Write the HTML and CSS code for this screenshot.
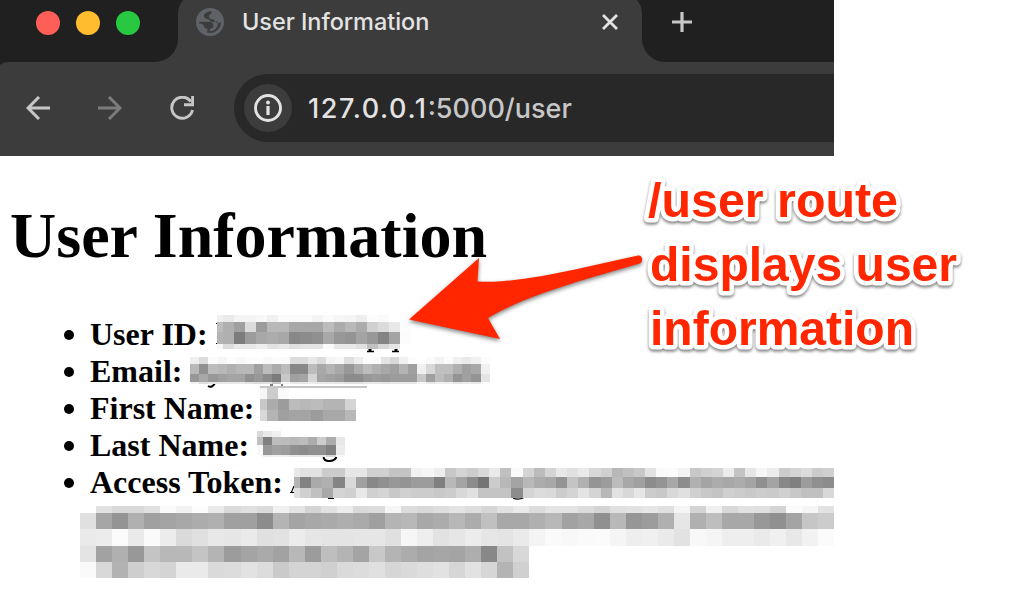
FILE: index.html
```html
<!DOCTYPE html>
<html lang="en">
<head>
<meta charset="utf-8">
<title>User Information</title>
<link rel="stylesheet" href="styles.css">
</head>
<body>
<main class="canvas">
  <div class="window">
    <header class="tab-strip">
      <div class="window-controls"><i class="dot red"></i><i class="dot yellow"></i><i class="dot green"></i></div>
      <div class="tab">
        <svg class="globe" width="28" height="28" viewBox="0 0 28 28"><circle cx="14" cy="14" r="14" fill="#5f6368"/><path d="M15.500 3.200C12 3.200 8.500 5 8 7.500c-.4 2.200 1.300 3.600 4 3.600 1.500 0 1.600 3 4.200 3 2.300 0 4.500-.3 5.300-.6 1 2.500-.3 6-2.500 8-1.500 1.400-3.500 1.800-5 1.500l-.2-2.200c2.600-.2 3.700-1.500 3.700-3.300 0-2.400-2-3.700-4.800-3.700H3.100C3 20 7.500 25 14 25c6 0 11-5 11-11-2 1.800-4.600 1.300-5.800-.4-.9-1.300-.8-2.200-2.600-2.300-2.600-.1-3.800-1.500-3.600-3.400.2-1.400 1.300-2 2.500-2.200z" fill="#3c3c3c"/><path d="M2.500 15.500C3.500 20.500 7 24 11.300 25v-4.200c-2.500 0-3.500-1.200-3.500-2.800 0-1.500-2-2.500-5.300-2.500z" fill="#5f6368"/></svg>
        <span class="tab-title">User Information</span>
        <svg class="close" width="18" height="18" viewBox="0 0 18 18"><path d="M2 2l14 14M16 2L2 16" stroke="#e3e3e3" stroke-width="2.800"/></svg>
      </div>
      <div class="strip-rest">
        <svg width="20" height="20" viewBox="0 0 20 20"><path d="M10 0v20M0 10h20" stroke="#c7c7c7" stroke-width="3.200"/></svg>
      </div>
      <svg class="tab-corner left" width="5" height="14"><path d="M0 0h5Q0 6 0 14z" fill="#202020"/></svg>
      <svg class="tab-corner right" width="5" height="14"><path d="M0 0h5v14Q5 6 0 0z" fill="#202020"/></svg>
    </header>
    <div class="toolbar">
      <svg class="toolbar-corner" width="9" height="4"><path d="M0 0h9Q3 0 0 3z" fill="#202020"/></svg>
      <svg class="nav" width="24" height="24" viewBox="0 0 24 24"><path d="M24 12H2M13 1L2 12l11 11" fill="none" stroke="#c7c7c7" stroke-width="3"/></svg>
      <svg class="nav" width="24" height="24" viewBox="0 0 24 24"><path d="M0 12h22M11 1l11 11-11 11" fill="none" stroke="#7c7c7c" stroke-width="3"/></svg>
      <svg class="nav" width="24" height="24" viewBox="0 0 24 24"><path d="M20.800 5.600A10.500 10.500 0 1 0 22.500 14" fill="none" stroke="#c7c7c7" stroke-width="2.900"/><path d="M22.600 0v8.700H14" fill="none" stroke="#c7c7c7" stroke-width="2.900"/></svg>
      <div class="address">
        <span class="site-info"><svg width="28" height="28" viewBox="0 0 28 28"><circle cx="14" cy="14" r="12.500" fill="none" stroke="#e3e3e3" stroke-width="2.900"/><circle cx="14" cy="8.500" r="1.900" fill="#e3e3e3"/><path d="M14 12v9" stroke="#e3e3e3" stroke-width="3.200"/></svg></span>
        <span class="url"><span class="host">127.0.0.1</span><span class="path">:5000/user</span></span>
      </div>
    </div>
    <section class="page">
      <h1 class="heading">User Information</h1>
      <ul class="fields">
        <li class="field"><span class="name">User ID:</span></li>
        <li class="field"><span class="name">Email:</span></li>
        <li class="field"><span class="name">First Name:</span></li>
        <li class="field"><span class="name">Last Name:</span></li>
        <li class="field"><span class="name">Access Token:</span></li>
      </ul>
    </section>
  </div>
  <svg class="redaction" id="redaction" width="834" height="610" viewBox="0 0 834 610">
    <g fill="none" stroke="#000">
      <path d="M367 351.500h7M392 351.500h7" stroke-width="1.500"/>
      <path d="M370 349v2M396 349v2" stroke-width="3"/>
      <path d="M208 386q4 2.500 7-3" stroke-width="2"/>
      <path d="M270 385h3M281 385h2" stroke-width="1.200"/>
      <path d="M216.500 323v1M216.500 343v1" stroke-width="1"/>
      <path d="M323.500 457c1 6 12 5 13-1" stroke-width="2"/>
      <path d="M513 498q5 2.500 11-.5M328 498.500h6" stroke-width="1.200"/>
      <path d="M290 492.500h4M291.500 492l2.500-6" stroke-width="1.200"/>
    </g>
    <path d="M260 387h107" stroke="#c6c6c6" stroke-width="2"/>
  </svg>
  <svg class="callout" width="600" height="220" viewBox="400 160 600 220">
    <path class="arrow" d="M409 319.500L479 258L477.500 281.500C520 284 580 268 638 255.500C643 255 643.500 262 639.500 263.500C590 278 526 295 488 318L500 339z"/>
    <g class="note">
      <text x="648" y="217" textLength="250" lengthAdjust="spacingAndGlyphs">/user route</text>
      <text x="650" y="281" textLength="307" lengthAdjust="spacingAndGlyphs">displays user</text>
      <text x="650" y="345" textLength="264" lengthAdjust="spacingAndGlyphs">information</text>
    </g>
  </svg>
</main>
<script src="mosaic.js"></script>
</body>
</html>
```
FILE: styles.css
```css
body { margin: 0; background: #fff; }
.canvas { position: relative; width: 1018px; height: 610px; overflow: hidden; background: #fff; }
.window { width: 834px; height: 610px; overflow: hidden; }
.tab-strip { position: relative; display: flex; height: 62px; background: #3c3c3c; }
.window-controls { display: flex; gap: 16px; width: 142px; height: 51px; padding: 11px 0 0 36px; background: #202020; border-bottom-right-radius: 23px; }
.dot { width: 24px; height: 24px; border-radius: 50%; }
.red { background: #ff5f57; }
.yellow { background: #febc2e; }
.green { background: #28c840; }
.tab { display: flex; align-items: center; box-sizing: border-box; width: 464px; height: 44px; padding: 0 23px 0 18px; font-family: Inter, sans-serif; color: #e3e3e3; }
.tab-title { margin: -2px 0 0 18px; font-size: 23.5px; font-weight: 500; letter-spacing: -.05px; white-space: nowrap; }
.close { margin-left: auto; }
.strip-rest { flex: 1; padding: 12px 0 0 30px; background: #202020; border-bottom-left-radius: 23px; }
.strip-rest svg { display: block; }
.tab-corner { position: absolute; top: 0; }
.tab-corner.left { left: 178px; }
.tab-corner.right { left: 637px; }
.toolbar { position: relative; display: flex; align-items: center; box-sizing: border-box; height: 94px; padding: 0 0 2px 26px; background: #3c3c3c; }
.toolbar-corner { position: absolute; left: 0; top: 0; }
.nav { flex: none; margin-right: 48px; }
.nav + .address { margin-left: -8px; }
.address { display: flex; align-items: center; flex: 1; height: 68px; box-sizing: border-box; padding-left: 10px; border-radius: 34px 0 0 34px; background: #282828; }
.site-info { display: flex; align-items: center; justify-content: center; width: 48px; height: 48px; border-radius: 50%; background: #3c3c3c; }
.url { margin-left: 16px; font: 500 27px Inter, sans-serif; white-space: nowrap; }
.host { color: #e3e3e3; letter-spacing: 1.6px; }
.path { color: #c7c7c7; }
.page { font-family: "Liberation Serif", serif; color: #000; }
.heading { margin: 43px 0 0 10px; font-size: 64px; line-height: 74px; white-space: nowrap; }
.fields { margin: 43px 0 0; padding: 0 0 0 64px; list-style: none; }
.field { display: flex; align-items: center; height: 37px; font-size: 32px; font-weight: bold; line-height: 37px; }
.field::before { content: ""; width: 10px; height: 10px; margin: 1px 16px 0 0; border-radius: 50%; background: #000; }
.redaction { position: absolute; left: 0; top: 0; }
.callout { position: absolute; left: 400px; top: 160px; }
.arrow { fill: #ff2600; filter: drop-shadow(0 2px 2px rgba(0,0,0,.5)); }
.note { font: bold 48px "Liberation Sans", sans-serif; fill: #ff2600; stroke: #fff; stroke-width: 9px; stroke-linejoin: round; paint-order: stroke; filter: drop-shadow(0 2px 1.5px rgba(0,0,0,.5)); }
.note text { paint-order: stroke; }
```
FILE: mosaic.js
```js
// Each block: left edge, width of its first cell, cell width, row edges, grey levels by row.
const blocks = [
  { x: 217, first: 5.7, size: 11.1, ys: [315, 322, 332, 344, 349], rows: [
    'f0 ea f4 f4 f8 f0 fb fa fb f4 fb f6 f4 ee fc fa ff ff',
    'bd b0 a0 dc 9c b8 b8 a8 a8 a8 bc ac b8 ac d0 dc e8 fd',
    'b4 b0 7c 9c a8 ac a8 88 8c 90 a8 98 94 a4 98 84 a4 fc',
    'f8 dc e8 e8 ee e2 e8 e0 e4 e4 fa e8 e8 e0 c0 d8 e6 ff'] },
  { x: 190.3, first: 9.07, size: 9.07, ys: [357, 364, 374, 382, 384], rows: [
    'ee dc fb f6 fc f8 fc fc f8 fc fa dc dc e8 dc f4 f8 e0 ee fc fa e4 d8 f0 fc ff fa f4 fc f0 ea f0 fc',
    'b8 90 bc b8 b0 b8 b8 a0 bc ac bc 88 88 bc a8 b4 a8 98 ac bc b0 a8 a0 b4 a0 f0 d8 c0 c0 b0 a0 a8 f0',
    '98 a8 98 a0 a4 a4 90 98 8c 7c c8 a0 a4 d4 a4 a0 9c 8c 8c 98 9c 98 9c 9c 9c c8 a0 bc b0 94 a0 94 e4',
    'f2 dc e8 e8 e8 e8 e2 dc e0 c8 f4 e8 e8 ec e8 e8 e6 e2 e2 e8 e8 e4 e8 e8 e8 f4 e8 ee ee e6 ec e8 fc'] },
  { x: 260, first: 7, size: 11.1, ys: [388, 399, 410, 421], rows: [
    'f6 cc fa ff ff ff ff ff ff',
    'c8 ac 9c bc b8 bc b4 b4 d4',
    'd8 b4 a0 a4 a4 9c a8 a8 b8'] },
  { x: 257, first: 6, size: 9.07, ys: [431, 437, 445, 455, 457], rows: [
    'd8 e8 f0 ff ff ff ff ff ff ff',
    'c0 80 bc bc b8 bc ac cc ac e8',
    'f8 98 a0 9c 90 8c 90 90 80 ec',
    'ff ec ee ee e8 e8 e8 e8 d8 fa'] },
  { x: 294, first: 6, size: 11.13, ys: [468, 477, 488, 498], rows: [
    'e8 e2 e2 cc cc e6 e6 d0 d0 c4 c4 f2 f6 ee c8 d4 cc d8 ea c0 fa d4 bc d4 e8 e0 ea d8 d0 b8 c0 c8 e2 fa fb f2 c8 d0 d4 ec c4 e6 f6 ec cc d4 dc cc d0',
    'b4 82 aa b0 84 d8 a0 88 90 98 94 9c 9c 80 b8 a4 8c 74 cc b8 a4 b8 ac a8 94 c4 b0 94 9c bc a8 a0 8c 94 a8 8c b0 a4 ac a8 ac a4 90 a4 88 80 9c 90 8c',
    'e0 d0 c0 a8 d4 d0 e8 d0 d4 c8 d0 cc cc c8 cc d8 e0 c4 c4 c4 8c d4 dc da cc d4 e4 d4 b8 e2 d8 e6 cc c8 d8 e0 d0 c8 c4 d0 cc c8 cc ca d0 c8 c0 c0 d8'] },
  { x: 80, first: 16.05, size: 16.05, ys: [506, 513, 529, 546, 562, 578], rows: [
    'ff e2 d8 d8 e0 fa f2 fc ea da e0 da f0 e4 d4 e2 ec da dc f5 dc d8 de e4 de d6 e2 ea dc e4 e4 dc d4 e0 e2 e6 e0 f5 d4 f0 d8 e2 e0 d4 fb f6 e2',
    'e0 a6 94 b0 a0 a4 a8 ac b0 a0 a0 8c b4 a4 a8 aa ae aa a0 b4 b8 a8 ac b8 ac c0 a8 a8 b0 b8 a2 a8 90 b8 96 9c b0 e6 b0 be a8 a8 98 90 a4 c6 cc',
    'ea ec fb ea fa ec da e0 e8 e6 ea e0 e2 ec e6 e4 e4 e6 e6 e0 f6 ee e2 e6 ec e6 e4 ea f4 fa f8 fa fb f5 ee f0 ea e2 f8 f5 ee ee ea f0 e8 f2 fb',
    'e4 a2 b0 98 c4 b8 b8 c4 b4 9c a4 aa a2 b8 9c be b4 a4 c8 b4 ac a4 a6 a4 ae 88 c2 d8',
    'fa d8 b2 ce d8 d4 ea ea da dc e2 dc ca d4 d4 d0 da dc e0 d6 da de e2 d6 e2 d6 b4 d0'] }
];

const svg = document.getElementById('redaction');
for (const { x, first, size, ys, rows } of blocks) {
  const edge = i => Math.round(i === 0 ? x : x + first + (i - 1) * size);
  rows.forEach((row, r) => row.split(' ').forEach((grey, c) => {
    const rect = document.createElementNS('http://www.w3.org/2000/svg', 'rect');
    rect.setAttribute('x', edge(c));
    rect.setAttribute('y', ys[r]);
    rect.setAttribute('width', edge(c + 1) - edge(c));
    rect.setAttribute('height', ys[r + 1] - ys[r]);
    rect.setAttribute('fill', '#' + grey.repeat(3));
    svg.appendChild(rect);
  }));
}
```
